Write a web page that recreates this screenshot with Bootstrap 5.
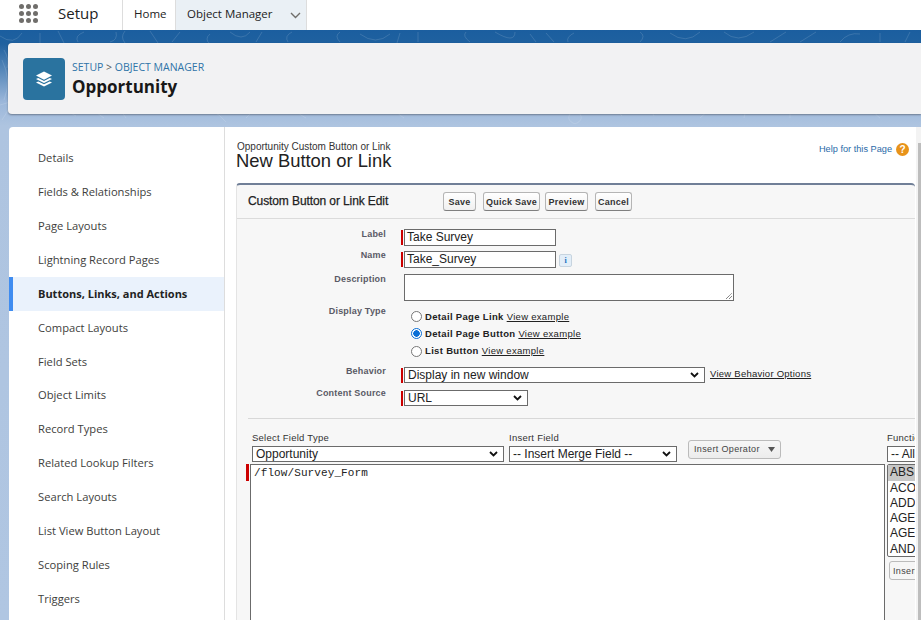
<!DOCTYPE html>
<html lang="en"><head><meta charset="utf-8"><title>Setup</title>
<link rel="stylesheet" href="https://cdn.jsdelivr.net/npm/bootstrap@5.3.0/dist/css/bootstrap.min.css">
<style>
html,body{height:620px;overflow:hidden;background:#fff}
body{font-family:"Open Sans","Noto Sans",sans-serif;color:#16325c;position:relative}
.topbar{height:30px;background:#fff}
.launcher{display:grid;grid-template-columns:repeat(3,5px);gap:2px;margin:4px 0 0 19px;width:19px;height:19px}
.launcher i{width:5px;height:5px;border-radius:50%;background:#706e6b;display:block}
.app-name{font-size:15px;margin-left:20px;width:64px;color:#222;line-height:27px}
.tab-home,.tab-om{font-size:11.5px;line-height:28px;color:#222;border-left:1px solid #ddd;height:30px}
.tab-home{width:53px;padding-left:11px}
.tab-om{width:132px;padding-left:11px;background:#eaf0f5;border-right:1px solid #ddd;gap:13px}
.tab-chev{margin:12px 0 0 4px}
.bandwrap{position:relative;height:590px;background:linear-gradient(#1b5e9f 0,#1f619f 14px,#9bb7da 72px,#aec4e0 96px,#b0c6e2 100%);padding:13px 0 0 8px}
.contours{position:absolute;left:0;top:0;width:921px;height:96px}
.obj-head{position:relative;height:71px;background:#f2f2f3;border-radius:4px 0 0 4px;box-shadow:0 1px 2px rgba(0,0,0,.35);padding:15px 0 0 15px;gap:7px}
.obj-icon{width:42px;height:42px;border-radius:4px;background:#2a739f}
.crumb{font-size:10.5px;color:#2f74a8;line-height:13px;margin-top:3px}
.crumb span{color:#555}
.obj-title{font-size:17px;font-weight:700;color:#181818;line-height:22px;margin-top:2px}
.panel{position:relative;margin:13px 0 0 1px;height:500px;background:#fff;border-radius:4px 0 0 0}
.sidenav{width:216px;border-right:1px solid #ddd;padding-top:14px;flex:none}
.sidenav a{display:block;height:33.93px;line-height:33.93px;padding-left:29px;font-size:11.2px;color:#3e3e3c;text-decoration:none}
.sidenav a.on{background:#eaf2fc;border-left:4px solid #3f8cf0;padding-left:25px;font-weight:700;color:#222;font-size:11px}
.sf{font-family:"Liberation Sans",Arial,sans-serif;flex:1;padding:15px 0 0 11px;min-width:0;overflow:hidden;position:relative}
.pg-sub{font-size:10px;color:#333;line-height:9px;padding-left:1px}
.pg-title{font-size:18.400px;color:#222;line-height:20px}
.help{font-size:9.200px;color:#2a6aa8;margin:1px 12px 0 0;gap:4px}
.help-i{width:13px;height:13px;border-radius:50%;background:#e8931a;color:#fff;font-size:10px;font-weight:700;line-height:13px;text-align:center}
.block{margin-top:12px;width:679px;height:460px;background:#f7f7f7;border-top:2px solid #707f97;border-radius:4px 4px 0 0;border-left:1px solid #e4e4e4;overflow:hidden}
.blockhead{height:34px;border-bottom:1px solid #dbdbdb;padding:0 0 0 11px}
.blockhead h2{font-size:12px;font-weight:400;-webkit-text-stroke:.25px #222;color:#222;margin:0 21px 0 0;width:174px;line-height:31px;letter-spacing:-.1px}
.sbtn{font:700 9px "Liberation Sans",Arial,sans-serif;color:#333;letter-spacing:.25px;height:19px;padding:0;border:1px solid #b5b5b5;border-bottom-color:#7f7f7f;border-radius:3px;background:linear-gradient(#fff,#f0f0f0);white-space:nowrap}
.frow{display:flex;align-items:flex-start}
.flabel{width:149px;text-align:right;font-size:9px;font-weight:700;color:#5a5a66;flex:none;letter-spacing:.2px;line-height:11px}
.lbl-name{margin-top:-1px}
.lbl-dn{padding-top:1px}
.lbl-beh{margin-top:-1px}
.lbl-sel{margin-top:-2px}
.req{width:2px;background:#c00;margin:1px 1px 0 15px;flex:none;height:15px}
.inp{border:1px solid #6b6b6b;background:#fff;font-size:12px;color:#222;line-height:15px;padding-left:2px;box-sizing:content-box;width:148px;height:15px;white-space:nowrap;overflow:hidden}
.sel{border:1px solid #6b6b6b;background:#fff;font-size:12px;color:#222;height:16px;line-height:14px;padding:0 4px 0 3px;white-space:nowrap;overflow:hidden;display:flex;align-items:center;justify-content:space-between;box-sizing:border-box}
.chev{width:9px;height:6px;flex:none;margin-right:1px}
.infob{width:13px;height:13px;margin:3px 0 0 3px;background:#e3eef8;border:1px solid #c7d4df;border-radius:2px;color:#1a6fc0;font:700 8px/11px "Liberation Serif",serif;text-align:center}
.desc{width:330px;height:27px;border:1px solid #6b6b6b;background:#fff;position:relative;margin-left:18px}
.radio-row{display:flex;align-items:center;font-size:9.500px;height:17.300px;color:#222}
.rd{width:11px;height:11px;border:1px solid #777;border-radius:50%;background:#fff;margin-right:3px;flex:none}
.rd.on{border:1px solid #0a6fd6;background:radial-gradient(#0a6fd6 0 3px,#fff 3.500px)}
.radio-row b{letter-spacing:.33px}
.radio-row u{margin-left:3px;letter-spacing:.3px}
.lnk{font-size:9.500px;text-decoration:underline;color:#222;margin-left:5px;letter-spacing:.25px}
.divline{border-top:1px solid #d8d8d8;margin:12px 0 0 11px}
.edlabel{font-size:9.500px;color:#333;line-height:11px;letter-spacing:.25px}
.opbtn{font-size:9px;height:19px;width:93px;margin:0 0 3px 11px;border:1px solid #bbb;border-radius:3px;background:linear-gradient(#f6f6f6,#ececec);color:#444;letter-spacing:.35px;display:flex;align-items:center;padding-left:5px;gap:8px}
.editor{border:1px solid #6b6b6b;background:#fff;width:635px;height:170px;font:11px/13px "Liberation Mono",monospace;color:#222;padding:2px 3px;margin-right:2px;letter-spacing:.1px;flex:none}
.flist{border:1px solid #6b6b6b;width:60px;font-size:12px;color:#222;line-height:15.300px;background:#fff;height:93px;overflow:hidden;border-radius:2px 0 0 2px}
.flist div{padding-left:2px;white-space:nowrap}
.flist div.pick{background:#c8c8c8}
.insbtn{margin-top:4px;font-size:9px;height:19px;width:40px;border:1px solid #bbb;border-radius:3px;background:#f6f6f6;color:#444;letter-spacing:.35px;padding:3px 0 0 3px;margin-left:2px}
.vscroll{position:absolute;right:0;top:143px;width:3px;height:477px;background:#bdbdbd}
.vscrolltrack{position:absolute;right:0;top:127px;width:5px;height:493px;background:#f3f3f3}
</style></head><body>
<div class="topbar d-flex">
  <div class="launcher"><i></i><i></i><i></i><i></i><i></i><i></i><i></i><i></i><i></i></div>
  <div class="app-name">Setup</div>
  <div class="tab-home">Home</div>
  <div class="tab-om d-flex align-items-start">Object Manager
    <svg width="11" height="7" viewBox="0 0 11 7" class="tab-chev"><path d="M1 1l4.500 4.500L10 1" fill="none" stroke="#706e6b" stroke-width="1.400"/></svg>
  </div>
</div>
<div class="bandwrap">
  <svg class="contours" viewBox="0 0 921 96" fill="none" stroke="#fff" stroke-opacity=".17" stroke-width=".8">
    <path d="M0 6q14 10 22-3M40 3v10M58 1l6 12M84 2q-10 4-6 10M110 12q8-2 6-10M125 1q-5 6 0 12M150 1q4 6 8 12M180 2l-8 10M210 4q-6 5 0 10M230 2q12 10 20 0M262 2l-6 10M292 2q-8 4-4 10M340 12q-6-6 0-10M360 4q16 12 30 0M400 3l-3 10M418 2v10M470 12q-8-6-4-10M495 2q20 12 20 0M530 4l6 8M546 3l8 9M574 3q-8 4-6 9M640 12q6-6 0-10M670 3q16 12 30-1M724 2q14 12 30 0M770 12l16-10M800 12l16-10M840 12q8-10 20-8M880 3v9M905 12l5-10"/>
    <path d="M0 75q20-8 30 4M40 84q20-10 36 2M90 78l14 10M130 74q-12 6-4 14M160 72q20 14 36 0M210 80q10 4 16 12M260 74l-14 14M300 72q-8 10 6 16M340 80h40M400 72q-10 8 4 16M440 78q24 12 40-4M520 72q16 14 36 0M570 84a6 6 0 1 0 10 0M610 72l12 14M660 72q-12 6-6 14M700 88l18-16M744 88q0-14 20-10M790 72v16M820 78q16 8 40-2M880 74q-10 8 0 14"/>
    <path d="M2 30q10 20 2 40M4 20q6 10 3 18M2 90q4-6 6-10"/>
  </svg>
  <div class="obj-head d-flex">
    <div class="obj-icon d-flex align-items-center justify-content-center">
      <svg width="18" height="18" viewBox="0 0 18 18"><path d="M9 1.500L17 5.600 9 9.700 1 5.600z" fill="#fff"/><path d="M1 9l2.200-1L9 10.900 14.800 8 17 9l-8 4z" fill="#fff"/><path d="M1 12.400l2.200-1L9 14.300 14.800 11.400 17 12.400l-8 4z" fill="#fff"/></svg>
    </div>
    <div>
      <div class="crumb">SETUP <span>&gt;</span> OBJECT MANAGER</div>
      <div class="obj-title">Opportunity</div>
    </div>
  </div>
  <div class="panel d-flex">
    <nav class="sidenav">
      <a href="#">Details</a><a href="#">Fields &amp; Relationships</a><a href="#">Page Layouts</a><a href="#">Lightning Record Pages</a><a href="#" class="on">Buttons, Links, and Actions</a><a href="#">Compact Layouts</a><a href="#">Field Sets</a><a href="#">Object Limits</a><a href="#">Record Types</a><a href="#">Related Lookup Filters</a><a href="#">Search Layouts</a><a href="#">List View Button Layout</a><a href="#">Scoping Rules</a><a href="#">Triggers</a>
    </nav>
    <div class="sf">
      <div class="d-flex justify-content-between align-items-start">
        <div><div class="pg-sub">Opportunity Custom Button or Link</div><div class="pg-title">New Button or Link</div></div>
        <div class="help d-flex align-items-center"><span>Help for this Page</span><span class="help-i">?</span></div>
      </div>
      <div class="block">
        <div class="blockhead d-flex align-items-center">
          <h2>Custom Button or Link Edit</h2>
          <button class="sbtn" style="width:33px;margin-right:7px">Save</button><button class="sbtn" style="width:57px;margin-right:5px">Quick Save</button><button class="sbtn" style="width:43px;margin-right:7px">Preview</button><button class="sbtn" style="width:37px">Cancel</button>
        </div>
        <div class="frow" style="margin-top:10px"><div class="flabel">Label</div><div class="req"></div><div class="inp">Take Survey</div></div>
        <div class="frow" style="margin-top:5px"><div class="flabel lbl-name">Name</div><div class="req"></div><div class="inp">Take_Survey</div><div class="infob">i</div></div>
        <div class="frow" style="margin-top:6px"><div class="flabel">Description</div><div class="desc"><svg width="8" height="8" viewBox="0 0 8 8" class="position-absolute end-0 bottom-0"><path d="M1 7l6-6M4 7l3-3" stroke="#555" stroke-dasharray="1 .6"/></svg></div></div>
        <div class="frow" style="margin-top:4px"><div class="flabel lbl-dn">Display Type</div>
          <div style="margin:0 0 0 25px">
            <div class="radio-row" style="margin-top:3px"><span class="rd"></span><b>Detail Page Link</b><u>View example</u></div>
            <div class="radio-row"><span class="rd on"></span><b>Detail Page Button</b><u>View example</u></div>
            <div class="radio-row"><span class="rd"></span><b>List Button</b><u>View example</u></div>
          </div>
        </div>
        <div class="frow" style="margin-top:7.400px"><div class="flabel lbl-beh">Behavior</div><div class="req"></div>
          <div class="sel" style="width:301px">Display in new window<svg class="chev" viewBox="0 0 9 6"><path d="M1 1l3.500 3.500L8 1" fill="none" stroke="#111" stroke-width="1.800"/></svg></div><span class="lnk">View Behavior Options</span></div>
        <div class="frow" style="margin-top:7px"><div class="flabel lbl-sel">Content Source</div><div class="req"></div>
          <div class="sel" style="width:124px">URL<svg class="chev" viewBox="0 0 9 6"><path d="M1 1l3.500 3.500L8 1" fill="none" stroke="#111" stroke-width="1.800"/></svg></div></div>
        <div class="divline"></div>
        <div class="d-flex" style="margin:13px 0 0 15px;width:800px;align-items:flex-end">
          <div style="width:257px"><div class="edlabel">Select Field Type</div><div class="sel" style="width:252px;margin-top:3px">Opportunity<svg class="chev" viewBox="0 0 9 6"><path d="M1 1l3.500 3.500L8 1" fill="none" stroke="#111" stroke-width="1.800"/></svg></div></div>
          <div style="width:168px"><div class="edlabel">Insert Field</div><div class="sel" style="width:168px;margin-top:3px">-- Insert Merge Field --<svg class="chev" viewBox="0 0 9 6"><path d="M1 1l3.500 3.500L8 1" fill="none" stroke="#111" stroke-width="1.800"/></svg></div></div>
          <div class="opbtn">Insert Operator <svg width="7" height="5" viewBox="0 0 7 5"><path d="M0 0h7L3.500 5z" fill="#555"/></svg></div>
          <div style="margin-left:106px;width:60px"><div class="edlabel">Functions</div><div class="sel" style="margin-top:3px;width:60px">-- All Function Categories --</div></div>
        </div>
        <div class="d-flex" style="margin:2px 0 0 9px;width:800px">
          <div class="req" style="margin:0 1px 0 0;height:17px;width:3px"></div>
          <div class="editor">/flow/Survey_Form</div>
          <div><div class="flist"><div class="pick">ABS</div><div>ACOS</div><div>ADDMONTHS</div><div>AGEIF</div><div>AGEIFS</div><div>AND</div></div>
          <div class="insbtn">Insert</div></div>
        </div>
      </div>
    </div>
  </div>
</div>
<div class="vscrolltrack"></div><div class="vscroll"></div>
</body></html>
